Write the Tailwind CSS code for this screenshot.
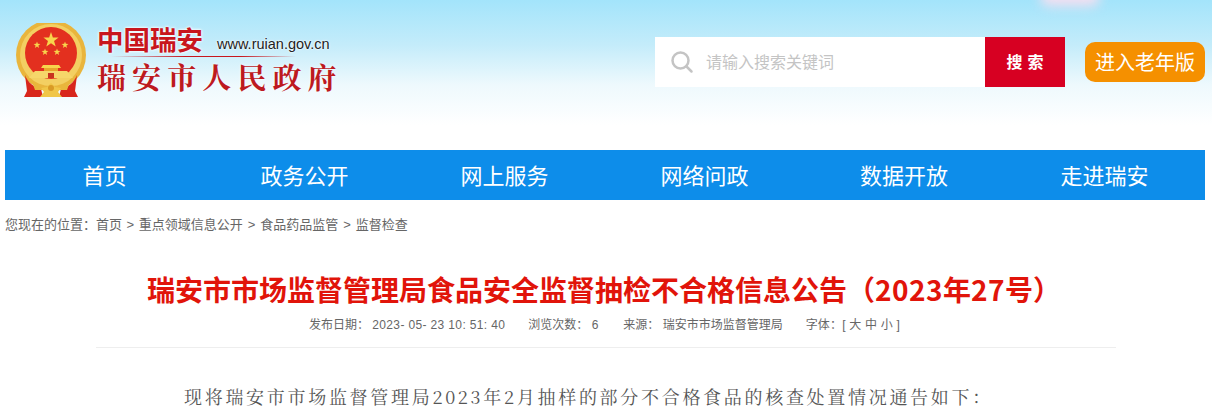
<!doctype html>
<html lang="zh">
<head>
  <meta charset="UTF-8">
  <meta name="viewport" content="width=device-width, initial-scale=1.0">
  <title>瑞安市人民政府</title>
  <script src="https://cdn.jsdelivr.net/npm/@tailwindcss/browser@4"></script>
</head>
<body class="bg-white h-[411px] overflow-hidden font-['Liberation_Sans','Noto_Sans_CJK_SC',sans-serif]">
  <!-- header -->
  <header class="relative h-[150px] bg-[linear-gradient(180deg,#a3e4fb_0px,#c4ecfa_45px,#eef9fd_85px,#ffffff_125px)] px-[15px] flex items-start justify-between overflow-hidden">
    <div class="absolute top-[-12px] left-[1040px] w-[60px] h-[18px] rounded-full bg-[#f6dff0] blur-[6px]"></div>
    <div class="relative flex items-start mt-[23px]">
      <svg width="72" height="76" viewBox="0 0 72 76">
        <defs>
          <polygon id="star" points="0,-10 2.350,-3.240 9.510,-3.090 3.800,1.240 5.880,8.090 0,4 -5.880,8.090 -3.800,1.240 -9.510,-3.090 -2.350,-3.240" fill="#f8d44c"/>
        </defs>
        <!-- gold ring and red disc -->
        <circle cx="36" cy="32" r="35" fill="#e9b53c"/>
        <circle cx="36" cy="32" r="31" fill="#f3cf62"/>
        <circle cx="36" cy="30" r="26" fill="#e3301f"/>
        <use href="#star" transform="translate(36 17) scale(0.8)"/>
        <use href="#star" transform="translate(22 22) scale(0.36)"/>
        <use href="#star" transform="translate(50 22) scale(0.36)"/>
        <use href="#star" transform="translate(30 29) scale(0.36)"/>
        <use href="#star" transform="translate(42 29) scale(0.36)"/>
        <!-- tiananmen gate -->
        <path d="M28 42h16l2 3H26z" fill="#f8d44c"/>
        <rect x="29" y="45" width="14" height="3" fill="#e8a62c"/>
        <path d="M14 55l6-7h32l6 7z" fill="#f6d66a"/>
        <rect x="33" y="50" width="6" height="5" fill="#c8321e"/>
        <!-- ribbons and rosette -->
        <path d="M10 52c3 8 9 12 16 14l2 8H9l3-6z" fill="#d8261c"/>
        <path d="M62 52c-3 8-9 12-16 14l-2 8h19l-3-6z" fill="#d8261c"/>
        <path d="M16 56c6 8 14 10 20 10s14-2 20-10l-4 11H20z" fill="#e9b53c"/>
        <path d="M25 74l4-5-3-4 6-1 4-4 4 4 6 1-3 4 4 5z" fill="#f0c648"/>
        <circle cx="36" cy="65" r="3" fill="#d99a26"/>
      </svg>
      <div class="ml-[10px] flex flex-col">
        <div class="flex items-end h-[30px]">
          <span class="font-['Noto_Sans_CJK_SC',sans-serif] text-[26.500px] leading-[28px] font-bold text-[#c8161d] [text-shadow:0_0_3px_#fff,0_0_3px_#fff]">中国瑞安</span>
          <span class="ml-[14px] mb-[1px] text-[14.500px] leading-[16px] text-[#222] [text-shadow:0_0_2px_#fff,0_0_2px_#fff]">www.ruian.gov.cn</span>
        </div>
        <div class="mt-[3px] ml-[14px] h-px w-[185px] bg-[linear-gradient(90deg,transparent,#c8161d_40%,#c8161d_70%,transparent)]"></div>
        <div class="mt-[2px] text-[29px] leading-[36px] font-bold tracking-[6.100px] font-['Noto_Serif_CJK_SC','Noto_Sans_CJK_SC',serif] text-[#bd1a1f] [text-shadow:0_0_3px_#fff] whitespace-nowrap">瑞安市人民政府</div>
      </div>
    </div>
    <div class="relative flex items-start mt-[37px] mr-[-8px]">
      <div class="w-[330px] h-[50px] bg-white flex items-center pl-[15px]">
        <svg width="24" height="24" viewBox="0 0 24 24" fill="none" stroke="#c4c4c4" stroke-width="2.500" stroke-linecap="round">
          <circle cx="10.500" cy="10.500" r="8"/>
          <path d="M16.500 16.500l5 5"/>
        </svg>
        <span class="ml-[12px] pt-[1px] text-[16px] text-[#c4c4c4]">请输入搜索关键词</span>
      </div>
      <button class="w-[80px] h-[50px] pt-[1px] pl-[5px] bg-[#d70022] text-white text-[16px] font-bold tracking-[5px]">搜索</button>
      <button class="ml-[20px] mt-[5px] w-[120px] h-[40px] pt-[1px] rounded-[10px] bg-[#f59000] text-white text-[20px]">进入老年版</button>
    </div>
  </header>

  <!-- nav -->
  <nav class="mx-[5px] w-[1200px] h-[50px] bg-[#0d8dea] grid grid-cols-6 text-white text-[22px] leading-[53px] text-center">
    <a class="-ml-[1px]">首页</a>
    <a class="-ml-[1px]">政务公开</a>
    <a class="-ml-[1px]">网上服务</a>
    <a class="-ml-[1px]">网络问政</a>
    <a class="-ml-[2px]">数据开放</a>
    <a class="-ml-[1px]">走进瑞安</a>
  </nav>

  <!-- breadcrumb -->
  <div class="ml-[5px] mt-[16px] h-[18px] text-[13px] leading-[18px] text-[#666] flex whitespace-nowrap">
    <span>您现在的位置：</span><span>首页</span>
    <span class="mx-[4.500px]">&gt;</span><span>重点领域信息公开</span>
    <span class="mx-[5px]">&gt;</span><span>食品药品监管</span>
    <span class="mx-[5px]">&gt;</span><span>监督检查</span>
  </div>

  <!-- article -->
  <main class="mx-auto w-[1020px] mt-[35px]">
    <h1 class="pr-[4px] font-['Noto_Sans_CJK_SC',sans-serif] text-[28px] leading-[40px] font-bold text-[#e1140a] text-center whitespace-nowrap">瑞安市市场监督管理局食品安全监督抽检不合格信息公告（<span class="tracking-[0.500px]">2023</span>年<span class="tracking-[0.500px]">27</span>号）</h1>
    <div class="mt-[7px] pb-[13px] pr-[3px] border-b border-[#eeeeee] flex justify-center gap-[23px] text-[12px] leading-[18px] text-[#666] whitespace-nowrap">
      <span>发布日期：&nbsp;<span class="tracking-[0.360px]">2023- 05- 23 10: 51: 40</span></span>
      <span class="pr-[2px]">浏览次数：&nbsp;6</span>
      <span>来源：&nbsp;瑞安市市场监督管理局</span>
      <span class="tracking-[0.200px]">字体：[ 大 中 小 ]</span>
    </div>
    <p class="mt-[33px] pl-[88px] font-['Noto_Serif_CJK_SC','Liberation_Serif','Noto_Sans_CJK_SC',serif] text-[18px] leading-[30px] tracking-[2.700px] text-[#555] whitespace-nowrap">现将瑞安市市场监督管理局2023年2月抽样的部分不合格食品的核查处置情况通告如下：</p>
  </main>
</body>
</html>
